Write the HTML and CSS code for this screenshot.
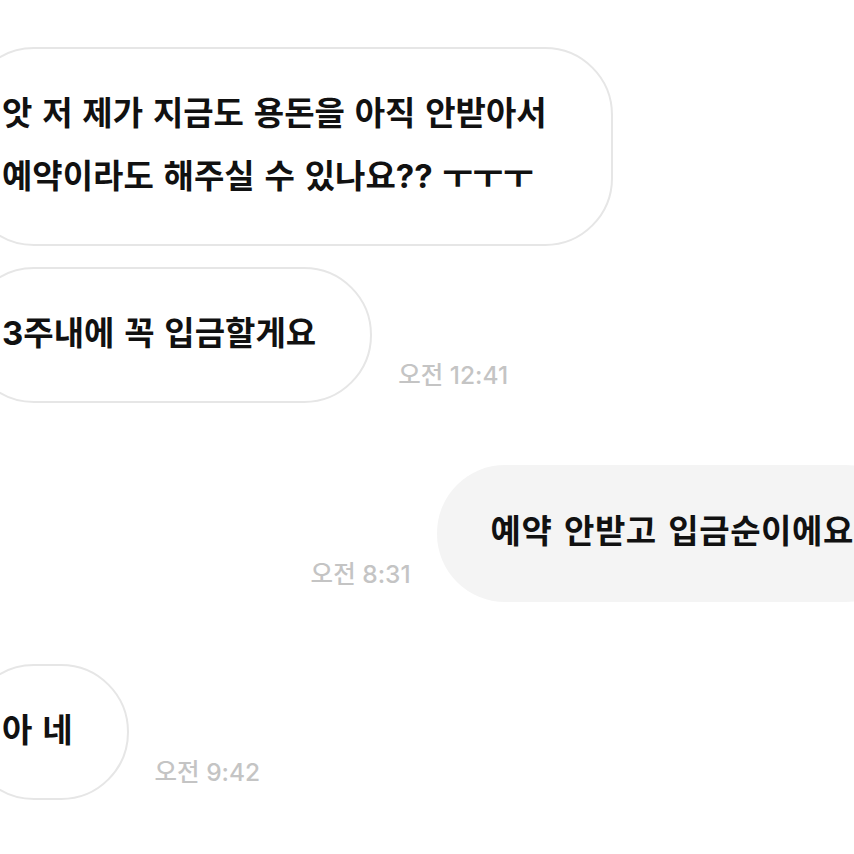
FILE: index.html
```html
<!DOCTYPE html>
<html lang="ko">
<head>
  <meta charset="UTF-8" />
  <meta name="viewport" content="width=device-width, initial-scale=1.0"/>
  <title>채팅</title>
  <link rel="stylesheet" href="styles.css">
</head>
<body>
  <div id="chat">
    <div class="row row-in">
      <div class="bubble bubble-in bubble-wide">앗 저 제가 지금도 용돈을 아직 안받아서<br>예약이라도 해주실 수 있나요?? ㅜㅜㅜ</div>
    </div>
    <div class="row row-in row-tight">
      <div class="bubble bubble-in">3주내에 꼭 입금할게요</div>
      <div class="time">오전 12:41</div>
    </div>
    <div class="row row-out">
      <div class="time">오전 8:31</div>
      <div class="bubble bubble-out">예약 안받고 입금순이에요</div>
    </div>
    <div class="row row-in">
      <div class="bubble bubble-in">아 네</div>
      <div class="time">오전 9:42</div>
    </div>
  </div>
</body>
</html>
```

FILE: styles.css
```css
* { margin: 0; padding: 0; box-sizing: border-box; }
body, html { height: 100%; background: white; overflow: hidden; }
body { font-family: Inter, "Noto Sans CJK KR", sans-serif; color: #111; }
#chat {
  padding-top: 47px;
  display: flex; flex-direction: column; gap: 62px;
}
.row { display: flex; align-items: flex-end; gap: 26px; }
.row-tight { margin-top: -41px; }
.row-in { margin-left: -34px; }
.row-out { justify-content: flex-end; margin-right: -60px; }
.bubble {
  font-size: 33px; font-weight: 700; line-height: 63px; word-spacing: 2px;
  padding: 33px 54px 36px 34px;
  border-radius: 68px;
  white-space: nowrap; flex-shrink: 0;
}
.bubble-in { border: 2px solid #e6e6e6; }
.bubble-wide { padding-right: 64px; }
.bubble-out {
  background: #f4f4f4; padding: 35px 60px 39px 54px;
  letter-spacing: 0.6px; word-spacing: 3px;
}
.time {
  font-size: 24.5px; font-weight: 500; color: #c4c4c4;
  line-height: 30px; margin-bottom: 13px;
  white-space: nowrap;
}
```
